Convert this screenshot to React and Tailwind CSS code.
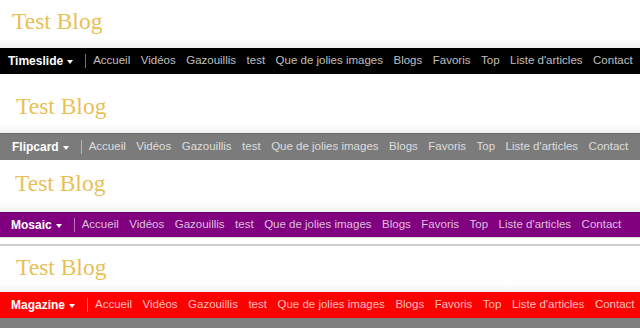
import React from 'react'

const links = ['Accueil', 'Vidéos', 'Gazouillis', 'test', 'Que de jolies images', 'Blogs', 'Favoris', 'Top', "Liste d'articles", 'Contact']

const sections = [
  { label: 'Timeslide', bar: 'bg-black h-[26px] pl-[8px]', title: 'pl-[12px] pt-[10px]', after: 'h-[11px] bg-white' },
  { label: 'Flipcard', bar: 'bg-[#7b7b7b] border-t border-[#6a6a6a] h-[27px] pl-[12px]', title: 'pl-[16px] pt-[10px]', after: 'h-[4px] bg-white' },
  { label: 'Mosaic', bar: 'bg-[#800080] border-t border-[#6e006e] h-[25px] pl-[11px]', title: 'pl-[15px] pt-[8px]', after: 'h-[7px] bg-white border-t border-[#dddddd]' },
  { label: 'Magazine', bar: 'bg-[#ff0000] h-[26px] pl-[11px]', title: 'pl-[16px] pt-[10px]', after: 'h-[10px] bg-[#7f7f7f]' },
]

function NavBar({ label, bar }) {
  return (
    <div className={`flex items-center text-[11.5px] font-['Liberation_Sans',Arial,sans-serif] ${bar}`}>
      <span className="font-bold text-white text-[12px]">{label}</span>
      <span className="ml-[4px] w-0 h-0 border-l-[3.5px] border-r-[3.5px] border-t-[4px] border-l-transparent border-r-transparent border-t-white mt-[1px]" />
      <span className="ml-[12px] w-px h-[14px] bg-white/45" />
      <div className="ml-[7px] flex gap-[10.5px] text-white/75 whitespace-nowrap">
        {links.map((l) => (
          <span key={l}>{l}</span>
        ))}
      </div>
    </div>
  )
}

export default function App() {
  return (
    <div className="w-[640px] h-[328px] overflow-hidden bg-white">
      {sections.map((s, i) => (
        <div key={s.label}>
          <div className={`h-[48px] bg-gradient-to-b from-white from-80% to-[#f2f2f2] ${i === 3 ? 'border-t-2 border-[#cccccc]' : ''}`}>
            <div className={`${s.title} text-[23.5px] leading-[23px] text-[#e8c056] font-['Liberation_Serif',Georgia,serif]`}>
              Test Blog
            </div>
          </div>
          <NavBar label={s.label} bar={s.bar} />
          <div className={s.after} />
        </div>
      ))}
    </div>
  )
}
